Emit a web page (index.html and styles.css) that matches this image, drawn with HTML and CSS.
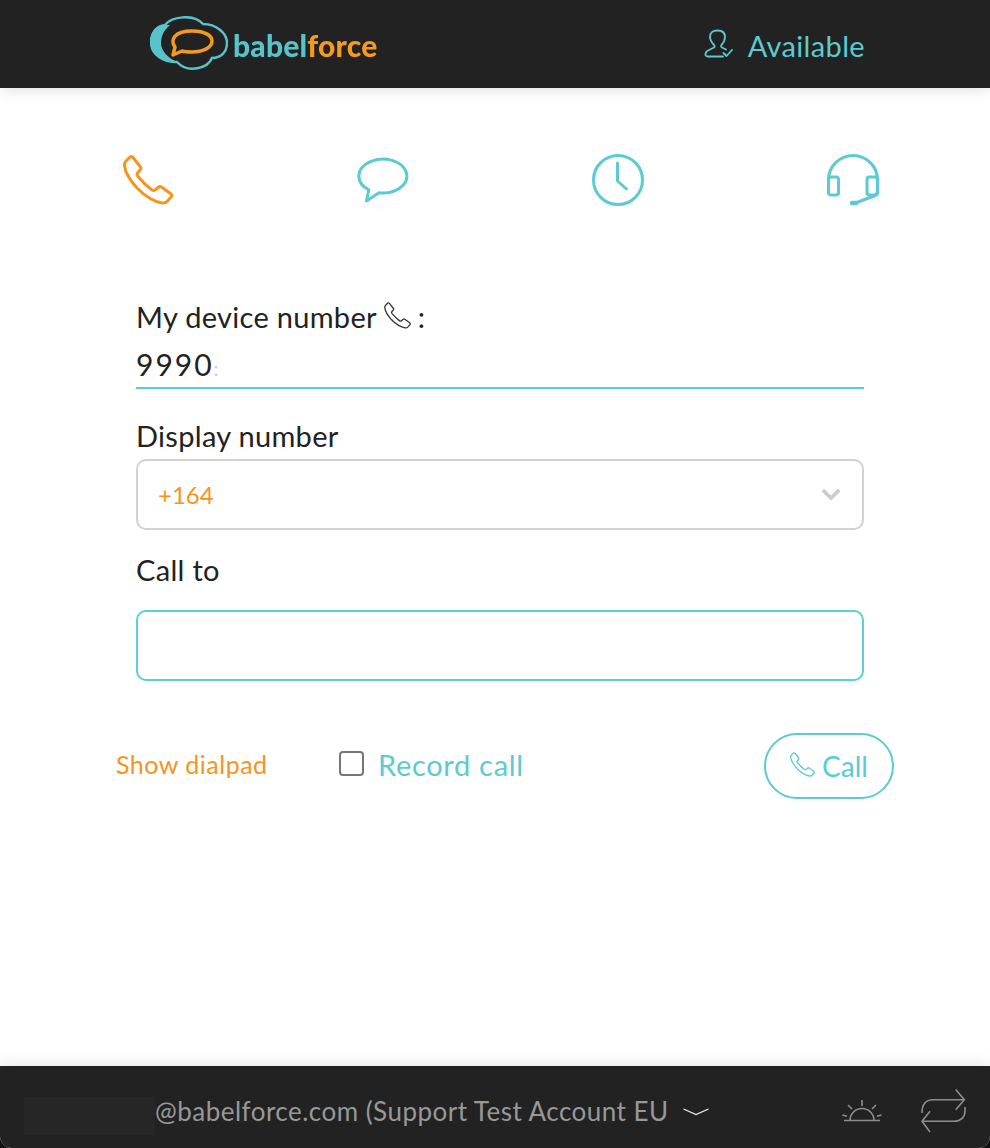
FILE: index.html
```html
<!DOCTYPE html>
<html lang="en">
<head>
<meta charset="utf-8">
<title>babelforce</title>
<link rel="stylesheet" href="styles.css">
</head>
<body>
<svg class="defs" width="0" height="0" aria-hidden="true">
  <symbol id="phone" viewBox="0 0 50 50">
    <path d="M3 6 L7 2 Q8.5 1 10 2.5 L17.5 12 Q18.5 13.5 17 15 L14.5 18 Q13.5 19.5 15 21.5 Q22 30 29 35 Q30.5 36 32 35 L35.5 32 Q37 31 38.5 32 L47.5 38.5 Q49.5 40 48 42 L44 46.5 Q42 48.5 39 48 Q27 46 14 33 Q3 21 1.5 11 Q1 8 3 6 Z"/>
  </symbol>
</svg>
<div class="app">
  <header class="topbar">
    <div class="logo">
      <svg class="logo-mark" viewBox="0 0 78 56">
        <path class="cloud" d="M15 9 C21 1 43 -3 53 8 C66 8 77 17 77 27 C77 36 71 42 62 42 C58 52 38 58 27 46 C13 47 1 38 1 26 C1 16 7 10 15 9 Z"/>
        <path class="cloud-fill" d="M15 9 C7 10 0 16 0 26 C1 38 13 47 27 46 C18 42 11 35 11 27 C11 20 14 14 20 9 Z"/>
        <path class="bubble" d="M32 35 L23 39 L25 31 C20 24 24 15 42 15 C56 15 62 20 62 25 C62 32 52 36 42 36 C38 36 35 36 32 35 Z"/>
      </svg>
      <span class="logo-text"><span class="logo-teal">babel</span><span class="logo-orange">force</span></span>
    </div>
    <div class="status">
      <svg class="status-icon" viewBox="0 0 29 29">
        <path d="M19 27.5 H4 Q1 27.5 1.5 24.5 Q2 22 6 20.5 L10 18.5 Q11 18 10.5 16.5 Q6 12 6 8 Q6 1.5 13.5 1.5 Q21 1.5 21 8 Q21 12 17.5 16 Q16.5 17.5 18 18.5 L22 20.5"/>
        <path d="M19.5 24 L22.5 27 L28 21"/>
      </svg>
      <span>Available</span>
    </div>
  </header>

  <main class="content">
    <nav class="tabs">
      <a class="tab"><svg class="tab-icon tab-phone"><use href="#phone"/></svg></a>
      <a class="tab"><svg class="tab-icon tab-chat" viewBox="0 0 52 46"><path d="M22 35.8 L9.5 44 L11.8 32.8 A24 17 0 1 1 22 35.8 Z"/></svg></a>
      <a class="tab"><svg class="tab-icon" viewBox="0 0 52 52"><circle cx="26" cy="26" r="24.5"/><path d="M25.5 9 V27 L34.5 35"/></svg></a>
      <a class="tab"><svg class="tab-icon" viewBox="0 0 52 52"><path d="M1.5 26 A24.5 24.5 0 0 1 50.5 26"/><rect x="1.5" y="23" width="10" height="18" rx="2.5"/><rect x="40" y="23" width="10.5" height="18" rx="2.5"/><path d="M50 39 Q50 41 47 42 L31 48"/><path class="mic" d="M25 49 H29"/></svg></a>
    </nav>

    <form class="form">
      <div class="field-label">My device number <svg class="label-icon"><use href="#phone"/></svg> :</div>
      <div class="underline-input">9990<span class="clipped">:</span></div>
      <div class="field-label second">Display number</div>
      <div class="select-box">
        <span>+164</span>
        <svg class="select-chevron" viewBox="0 0 22 14"><path d="M2 2 L11 11 L20 2"/></svg>
      </div>
      <div class="field-label third">Call to</div>
      <input class="text-box" type="text">
    </form>

    <div class="actions">
      <a class="dialpad-link">Show dialpad</a>
      <label class="record">
        <input class="checkbox" type="checkbox">
        <span>Record call</span>
      </label>
      <button class="call-button" type="button"><svg class="call-icon"><use href="#phone"/></svg>Call</button>
    </div>
  </main>

  <footer class="bottombar">
    <span class="redacted"></span>
    <span class="account">@babelforce.com (Support Test Account EU</span>
    <svg class="account-chevron" viewBox="0 0 26 8"><path d="M0.5 1 L13 6.5 L25.5 1"/></svg>
    <svg class="sun" viewBox="0 0 40 23">
      <path d="M2 21.5 H38"/><path d="M8 21.5 A12 12 0 0 1 32 21.5"/>
      <path d="M20 1 V7"/><path d="M6 6 L10 10"/><path d="M34 6 L30 10"/><path d="M0.5 16 L5 17.3"/><path d="M39.5 16 L35 17.3"/>
    </svg>
    <svg class="repeat" viewBox="0 0 45 44">
      <path d="M34.7 0.5 L43.3 10.7 L34.7 20.7"/>
      <path d="M43 10.7 H12 C5 10.7 1 15 1 24"/>
      <path d="M44 18 V22 C44 28 40 32.3 33 32.3 H1.5"/>
      <path d="M9 22.3 L1 32.3 L9 43"/>
    </svg>
  </footer>
</div>
</body>
</html>
```
FILE: styles.css
```css
* { box-sizing: border-box; }
html, body { margin: 0; height: 100%; background: #111; }
.defs { position: absolute; }
.app {
  height: 1148px; width: 990px; display: flex; flex-direction: column;
  font-family: Lato, "Noto Sans", sans-serif; background: #fff; overflow: hidden;
  border-radius: 0 0 12px 12px;
}
.topbar {
  height: 88px; flex: none; background: #222; display: flex; align-items: center;
  padding: 0 125px 0 150px; justify-content: space-between;
  box-shadow: 0 2px 14px rgba(0,0,0,.12); position: relative;
}
.logo { display: flex; align-items: center; gap: 5px; filter: blur(.4px); }
.logo-mark { width: 78px; height: 56px; display: block; }
.cloud { fill: none; stroke: #58c3cb; stroke-width: 2.5; }
.cloud-fill { fill: #58c3cb; }
.bubble { fill: none; stroke: #f49a1f; stroke-width: 3.5; stroke-linejoin: round; }
.logo-text { font-size: 30px; font-weight: 900; letter-spacing: .2px; margin-top: 2px; }
.logo-teal { color: #58c3cb; }
.logo-orange { color: #f49a1f; }
.status { display: flex; align-items: center; gap: 15px; color: #5bcbd1; font-size: 29px; letter-spacing: .35px; padding-top: 2px; }
.status-icon { width: 29px; height: 29px; fill: none; stroke: #5bcbd1; stroke-width: 1.8; stroke-linecap: round; stroke-linejoin: round; margin-top: -4px; }
.content { flex: 1; display: flex; flex-direction: column; }
.tabs { display: grid; grid-template-columns: repeat(4, 1fr); padding: 66px 20px 0 31px; }
.tab { display: flex; justify-content: center; }
.tab-icon { width: 52px; height: 52px; fill: none; stroke: #5bcbd1; stroke-width: 3; stroke-linecap: round; stroke-linejoin: round; }
.tab-phone { stroke: #f7941d; width: 50px; height: 52px; }
.tab-chat { margin-left: -1px; }
.mic { stroke-width: 4.5; }
.form { display: flex; flex-direction: column; margin: 93px 126px 0 136px; color: #222; }
.field-label { font-size: 29px; line-height: 36px; letter-spacing: .3px; display: flex; align-items: center; gap: 7px; white-space: nowrap; }
.second { margin-top: 29px; }
.third { margin-top: 22px; }
.label-icon { width: 27px; height: 27px; fill: none; stroke: #333; stroke-width: 2.4; stroke-linejoin: round; margin: -4px 0 0 0; }
.underline-input {
  height: 54px; border-bottom: 2px solid #5bcbd1; padding-top: 8px;
  font-size: 30px; line-height: 42px; letter-spacing: 2px; color: #222; width: 100%;
}
.clipped { color: #ccc; font-size: 20px; letter-spacing: 0; }
.select-box {
  height: 71px; margin-top: 5px; border: 2px solid #d2d2d2; border-radius: 10px;
  display: flex; align-items: center; justify-content: space-between;
  padding: 0 21px 0 20px; color: #f7941d; font-size: 24px;
}
.select-chevron { width: 20px; height: 13px; fill: none; stroke: #ccc; stroke-width: 4; }
.text-box {
  height: 71px; margin-top: 22px; border: 2px solid #5bd1d3; border-radius: 10px; outline: 0;
  width: 100%; background: #fff;
}
.actions { display: flex; align-items: center; padding: 0 96px 0 116px; margin-top: 52px; }
.dialpad-link { color: #f7941d; font-size: 25px; letter-spacing: .5px; width: 223px; padding-bottom: 4px; }
.record { display: flex; align-items: center; gap: 14px; color: #5bcbd1; font-size: 29px; letter-spacing: .7px; padding-bottom: 4px; }
.checkbox {
  appearance: none; width: 25px; height: 25px; margin: 0 0 2px; border: 2px solid #767676; border-radius: 4px; background: #fff;
}
.call-button {
  margin-left: auto; width: 130px; height: 66px; border: 2px solid #5bcbd1; border-radius: 33px;
  background: #fff; color: #5bcbd1; font: 28px Lato, sans-serif;
  display: flex; align-items: center; justify-content: center; gap: 7px; padding: 0;
}
.call-icon { width: 25px; height: 25px; fill: none; stroke: #5bcbd1; stroke-width: 2.6; stroke-linejoin: round; margin-top: -4px; }
.bottombar {
  height: 82px; flex: none; background: #222; display: flex; align-items: center;
  padding: 8px 24px 0 24px; color: #989898; font-size: 26px;
  box-shadow: 0 -2px 14px rgba(0,0,0,.1); position: relative;
}
.redacted { width: 131px; height: 38px; background: #262626; flex: none; margin-top: 10px; }
.account { white-space: nowrap; letter-spacing: .48px; }
.account-chevron { width: 26px; height: 8px; margin-left: 14px; fill: none; stroke: #eee; stroke-width: 1.3; margin-top: 2px; }
.sun { width: 40px; height: 23px; margin-left: auto; fill: none; stroke: #8e8e8e; stroke-width: 1.6; margin-top: -2px; }
.repeat { width: 45px; height: 44px; margin-left: 39px; fill: none; stroke: #8e8e8e; stroke-width: 1.6; }
```
